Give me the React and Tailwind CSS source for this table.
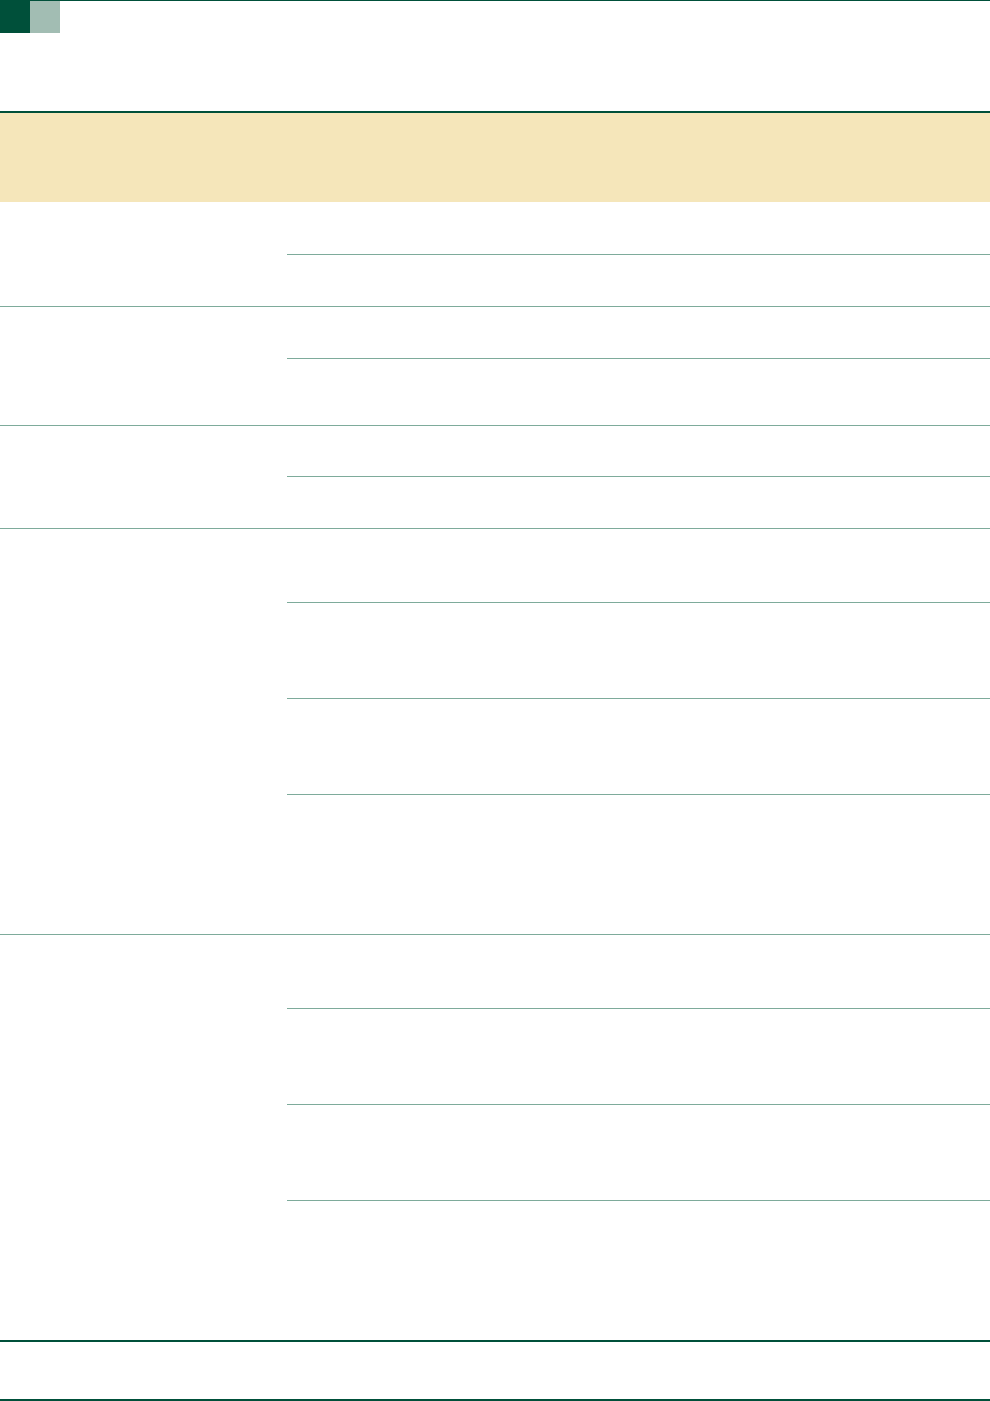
export default function App() {
  const groups = [
    { sub: [53, 51], dark: false },
    { sub: [52, 66], dark: false },
    { sub: [51, 51], dark: false },
    { sub: [74, 96, 96, 139], dark: false },
    { sub: [74, 96, 96, 139], dark: true },
  ];
  return (
    <div className="w-[990px] min-h-[1401px] bg-white" style={{ fontFamily: '"Liberation Sans", sans-serif' }}>
      <div className="h-[111px] border-t border-[#00503a]">
        <div className="flex">
          <div className="w-[30px] h-[32px] bg-[#00503a]" />
          <div className="w-[30px] h-[32px] bg-[#a2bdb3]" />
        </div>
      </div>
      <div className="h-[91px] border-t-2 border-[#00503a] bg-[#f5e6ba]" />
      {groups.map((g, i) => (
        <div
          key={i}
          className={
            g.dark
              ? "flex border-b-2 border-[#00503a]"
              : "flex border-b border-[#7eab9b]"
          }
        >
          <div className="w-[287px]" />
          <div className="flex-1 flex flex-col">
            {g.sub.map((h, j) => (
              <div
                key={j}
                className={j < g.sub.length - 1 ? "border-b border-[#7eab9b]" : ""}
                style={{ height: h }}
              />
            ))}
          </div>
        </div>
      ))}
      <div className="h-[59px] border-b-2 border-[#00503a]" />
    </div>
  );
}
